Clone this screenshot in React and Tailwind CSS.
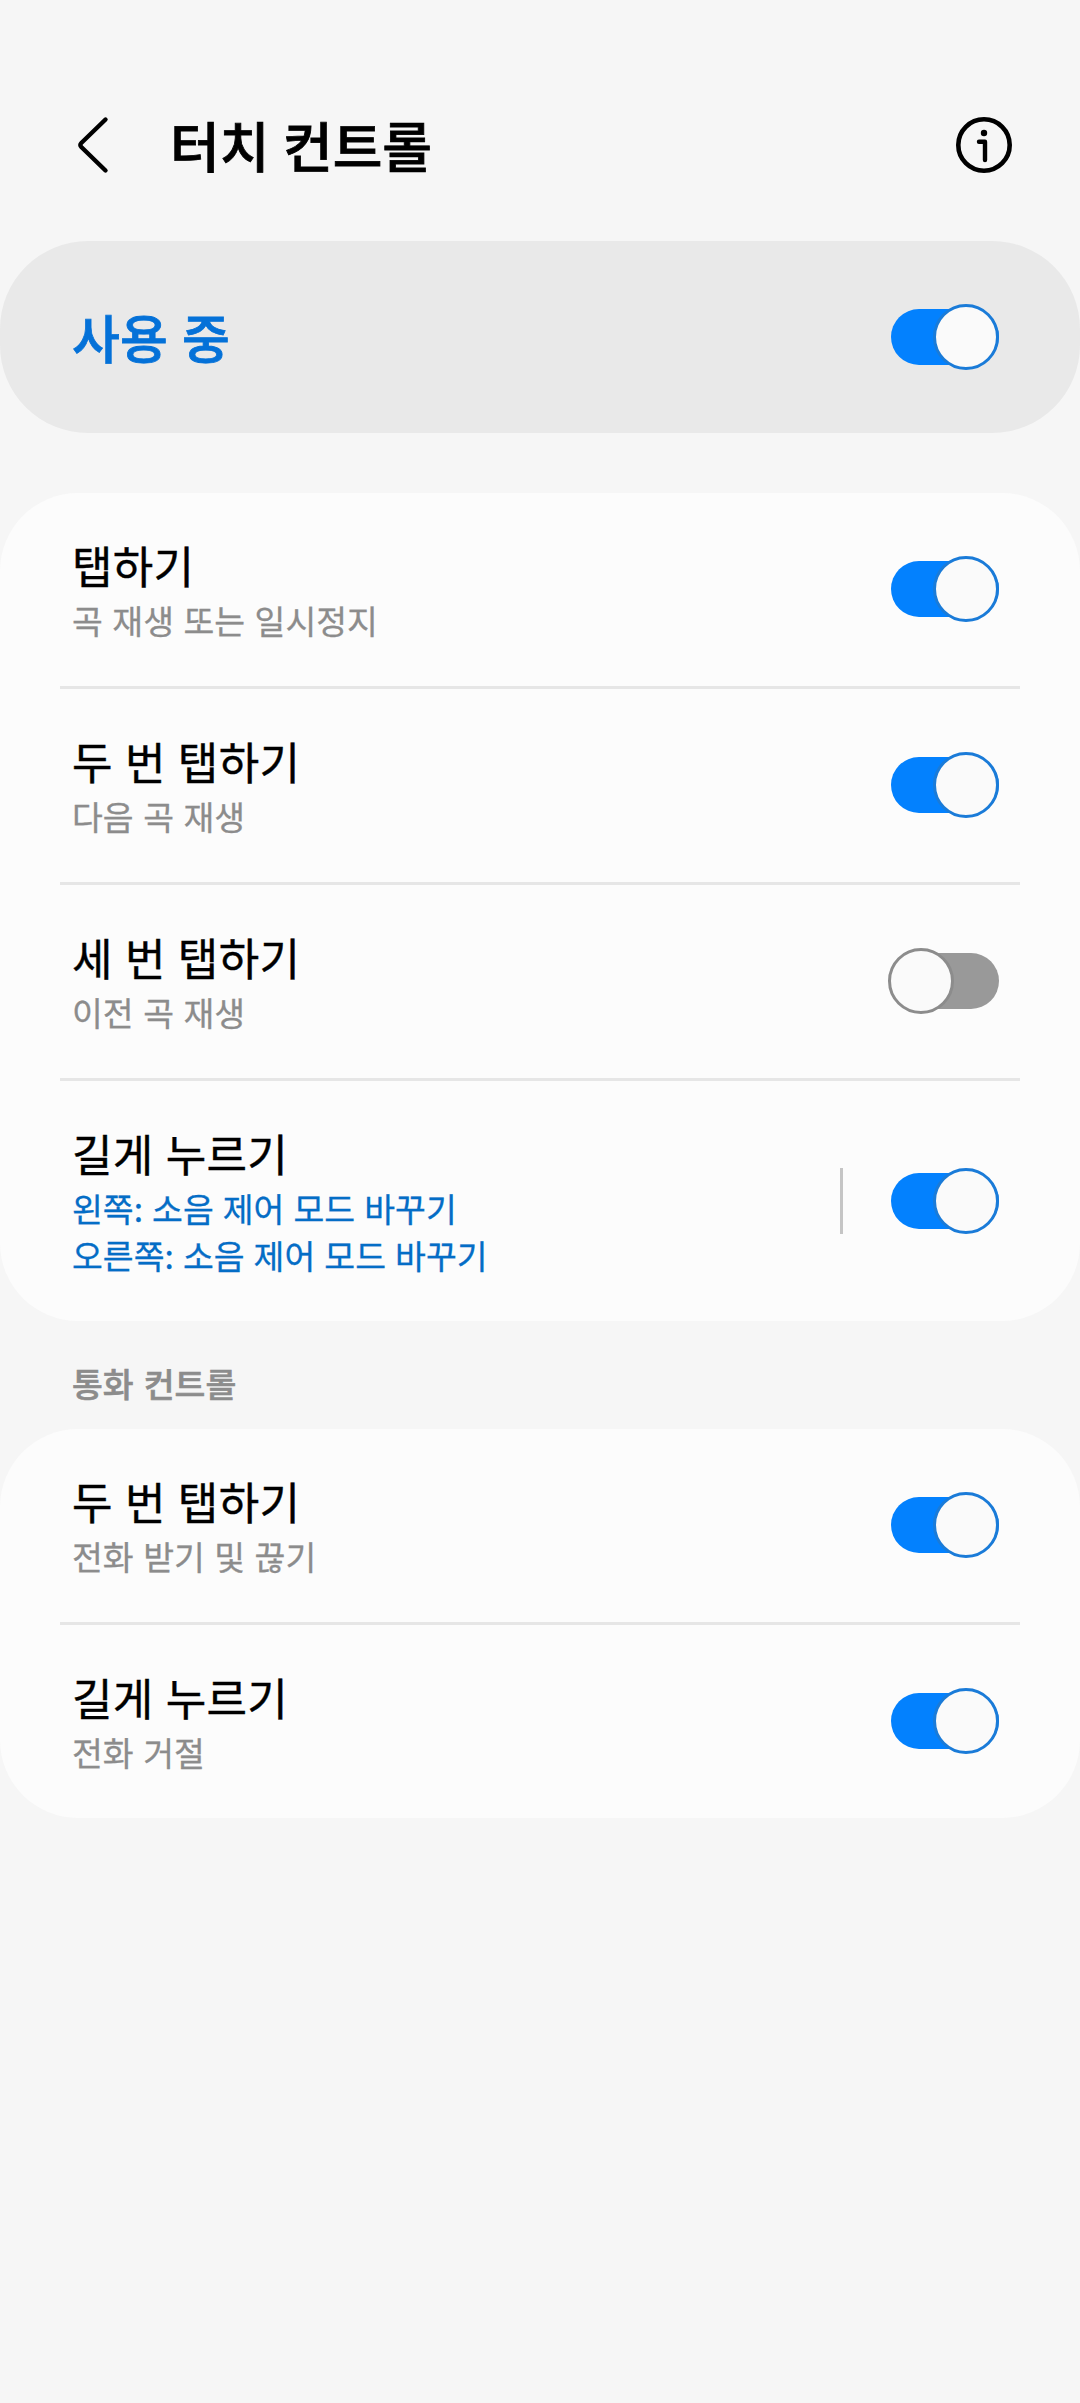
const FONT = "font-['Noto_Sans_CJK_KR','Noto_Sans',sans-serif]";

function Toggle({ on = true }) {
  return on ? (
    <div className="flex h-14 w-[108px] items-center justify-end rounded-full bg-[#0381fe]">
      <div className="size-[66px] shrink-0 rounded-full border-[3px] border-[#1a7bd8] bg-[#fafafa]" />
    </div>
  ) : (
    <div className="flex h-14 w-[108px] items-center rounded-full bg-[#999999]">
      <div className="-ml-[3px] size-[66px] shrink-0 rounded-full border-[3px] border-[#8c8c8c] bg-[#fafafa]" />
    </div>
  );
}

function Row({ title, lines, on = true, accent = false, tall = false }) {
  return (
    <div className={`flex items-center pr-[81px] pl-[72px] ${tall ? "h-60" : "h-[193px] pb-px"}`}>
      <div className="flex-1 whitespace-nowrap">
        <div className="mb-[2px] text-[44px] leading-[58px] tracking-[0.3px] text-black [word-spacing:2px] [-webkit-text-stroke:0.4px_currentColor]">
          {title}
        </div>
        {lines.map((line) => (
          <div
            key={line}
            className={`text-[33.5px] leading-[47px] [-webkit-text-stroke:0.3px_currentColor] ${accent ? "text-[#046dc6] [word-spacing:1.6px]" : "text-[#8c8c8c] [word-spacing:2px]"}`}
          >
            {line}
          </div>
        ))}
      </div>
      {accent && <div className="mr-12 h-[66px] w-[3px] bg-[#c5c5c5]" />}
      <Toggle on={on} />
    </div>
  );
}

const Divider = () => <div className="mx-[60px] h-[3px] bg-[#e6e6e6]" />;

export default function App() {
  return (
    <div className={`h-[2403px] w-[1080px] bg-[#f6f6f6] ${FONT}`}>
      <header className="flex h-[241px] items-center pt-[49px] pr-[68px] pl-[75px]">
        <svg width="36" height="60" viewBox="0 0 36 60" fill="none" stroke="black" strokeWidth="4.4" strokeLinecap="round" strokeLinejoin="round">
          <path d="M30.5 4.5 L6.3 28 Q4.3 30 6.3 32 L30.5 55.5" />
        </svg>
        <h1 className="ml-[59px] flex-1 text-[54px] leading-[80px] font-medium [word-spacing:1.5px] [-webkit-text-stroke:0.8px_currentColor]">
          터치 컨트롤
        </h1>
        <svg width="56" height="56" viewBox="0 0 56 56" fill="none" stroke="black">
          <circle cx="28" cy="28" r="25.7" strokeWidth="4.6" />
          <circle cx="28" cy="16" r="3.2" fill="black" stroke="none" />
          <path d="M23 24.8 H29 V43" strokeWidth="4.4" strokeLinecap="round" strokeLinejoin="round" />
        </svg>
      </header>
      <section className="flex h-48 items-center justify-between rounded-[88px] bg-[#e9e9e9] pr-[81px] pl-[72px]">
        <div className="text-[52px] leading-[76px] font-medium tracking-[0.2px] text-[#0471d8] [word-spacing:2px] [-webkit-text-stroke:0.8px_currentColor]">
          사용 중
        </div>
        <Toggle />
      </section>
      <section className="mt-[60px] rounded-[78px] bg-[#fcfcfc]">
        <Row title="탭하기" lines={["곡 재생 또는 일시정지"]} />
        <Divider />
        <Row title="두 번 탭하기" lines={["다음 곡 재생"]} />
        <Divider />
        <Row title="세 번 탭하기" lines={["이전 곡 재생"]} on={false} />
        <Divider />
        <Row title="길게 누르기" lines={["왼쪽: 소음 제어 모드 바꾸기", "오른쪽: 소음 제어 모드 바꾸기"]} accent tall />
      </section>
      <h2 className="flex h-[108px] items-center pt-[17px] pl-[72px] text-[33.5px] font-medium text-[#8c8c8c] [word-spacing:2.6px] [-webkit-text-stroke:0.6px_currentColor]">
        통화 컨트롤
      </h2>
      <section className="rounded-[78px] bg-[#fcfcfc]">
        <Row title="두 번 탭하기" lines={["전화 받기 및 끊기"]} />
        <Divider />
        <Row title="길게 누르기" lines={["전화 거절"]} />
      </section>
    </div>
  );
}
